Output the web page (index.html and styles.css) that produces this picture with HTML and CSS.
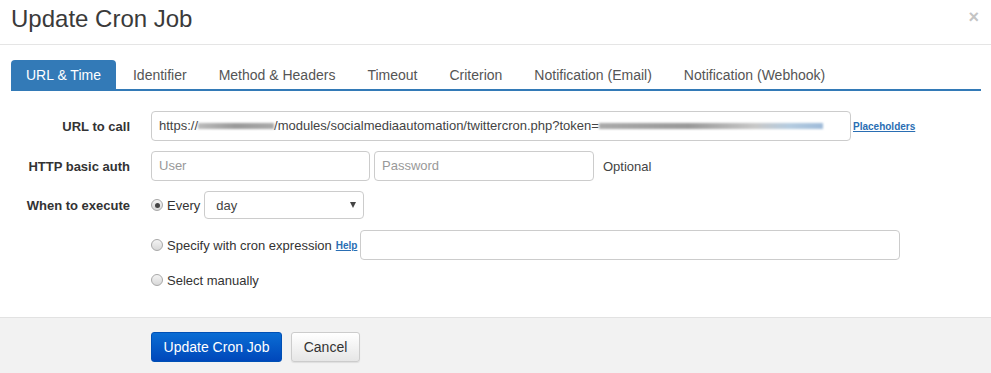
FILE: index.html
```html
<!DOCTYPE html>
<html>
<head>
<meta charset="utf-8">
<link rel="stylesheet" href="styles.css">
</head>
<body>
<div class="modal">
  <div class="modal-header">
    <h4 class="modal-title">Update Cron Job</h4>
    <span class="close">×</span>
  </div>
  <div class="modal-body">
    <ul class="tabs">
      <li class="tab active">URL &amp; Time</li>
      <li class="tab">Identifier</li>
      <li class="tab">Method &amp; Headers</li>
      <li class="tab">Timeout</li>
      <li class="tab">Criterion</li>
      <li class="tab">Notification (Email)</li>
      <li class="tab">Notification (Webhook)</li>
    </ul>
    <div class="form">
      <div class="label">URL to call</div>
      <div class="field">
        <div class="input url">https://<span class="blur b1"></span>/modules/socialmediaautomation/twittercron.php?token=<span class="blur b2"></span></div>
        <a class="small-link">Placeholders</a>
      </div>

      <div class="label">HTTP basic auth</div>
      <div class="field auth">
        <div class="input user placeholder">User</div>
        <div class="input pass placeholder">Password</div>
        <span class="hint">Optional</span>
      </div>

      <div class="label top">When to execute</div>
      <div class="options">
        <div class="opt opt-every">
          <span class="radio checked"></span><span class="opt-text">Every</span>
          <div class="select"><span>day</span><span class="caret"></span></div>
        </div>
        <div class="opt opt-cron">
          <span class="radio"></span><span class="opt-text">Specify with cron expression</span>
          <a class="small-link help">Help</a>
          <div class="input cron"></div>
        </div>
        <div class="opt opt-manual">
          <span class="radio"></span><span class="opt-text">Select manually</span>
        </div>
      </div>
    </div>
  </div>
  <div class="modal-footer">
    <button class="btn btn-primary">Update Cron Job</button>
    <button class="btn btn-default">Cancel</button>
  </div>
</div>
</body>
</html>
```

FILE: styles.css
```css
* { box-sizing: border-box; }
html, body { margin: 0; padding: 0; background: #fff; }
body {
  font-family: "Liberation Sans", Arial, sans-serif;
  font-size: 13px;
  color: #333;
}
.modal { width: 991px; }
.modal-header {
  height: 45px;
  border-bottom: 1px solid #e5e5e5;
  display: flex;
  justify-content: space-between;
  align-items: flex-start;
  padding: 5px 12px 0 11px;
}
.modal-title {
  margin: 0;
  font-size: 24px;
  font-weight: normal;
  line-height: 28px;
  color: #3a3a3a;
}
.close {
  font-size: 18px;
  font-weight: bold;
  color: #c4c4c4;
  line-height: 18px;
  margin-top: 3px;
}
.modal-body { padding: 15px 10px 27px 11px; }
.tabs {
  list-style: none;
  margin: 0;
  padding: 0;
  display: flex;
  border-bottom: 2px solid #337ab7;
}
.tab {
  font-size: 14px;
  line-height: 20px;
  padding: 5px 15px 4px;
  margin-right: 2px;
  color: #555;
  border-radius: 4px 4px 0 0;
}
.tab.active { background: #337ab7; color: #fff; }
.form {
  margin-top: 20px;
  display: grid;
  grid-template-columns: 119px 1fr;
  column-gap: 21px;
  row-gap: 10px;
}
.label {
  font-weight: bold;
  text-align: right;
  align-self: center;
}
.label.top { align-self: start; margin-top: 7px; }
.field { display: flex; align-items: center; }
.input {
  height: 30px;
  border: 1px solid #ccc;
  border-radius: 4px;
  padding: 0 7px;
  line-height: 28px;
  font-size: 13px;
  color: #555;
  white-space: nowrap;
  overflow: hidden;
  background: #fff;
}
.placeholder { color: #999; }
.url { width: 700px; color: #444; }
.blur {
  display: inline-block;
  vertical-align: middle;
  height: 6px;
  filter: blur(1.2px);
  margin-top: -2px;
}
.b1 { width: 76px; background: linear-gradient(90deg, #bbb, #999 50%, #aaa); }
.b2 { width: 224px; background: linear-gradient(90deg, #aaa, #999 40%, #c8c8c8 70%, #b5cce0 85%, #9fbbd9); }
.small-link {
  font-size: 10px;
  font-weight: bold;
  color: #2a6eb3;
  text-decoration: underline;
}
.field .small-link { margin-left: 2px; }
.auth .user { width: 219px; }
.auth .pass { width: 220px; margin-left: 4px; }
.hint { margin-left: 9px; color: #444; }
.options { display: flex; flex-direction: column; }
.opt { display: flex; align-items: center; }
.opt-every { height: 28px; }
.opt-cron { height: 30px; margin-top: 11px; }
.opt-manual { height: 20px; margin-top: 10px; }
.radio {
  width: 12px;
  height: 12px;
  border-radius: 50%;
  border: 1px solid #a8a8a8;
  background: linear-gradient(#f4f4f4, #d8d8d8);
  display: inline-flex;
  align-items: center;
  justify-content: center;
  flex: none;
}
.radio.checked::after {
  content: "";
  width: 5px;
  height: 5px;
  border-radius: 50%;
  background: #444;
}
.opt-text { margin-left: 4px; color: #333; }
.select {
  width: 160px;
  height: 28px;
  margin-left: 4px;
  border: 1px solid #ccc;
  border-radius: 4px;
  display: flex;
  align-items: center;
  justify-content: space-between;
  padding: 0 7px 0 11px;
  color: #444;
}
.caret {
  width: 0;
  height: 0;
  border-left: 3.5px solid transparent;
  border-right: 3.5px solid transparent;
  border-top: 6px solid #444;
}
.help { margin-left: 4px; }
.cron { width: 540px; margin-left: 3px; }
.modal-footer {
  border-top: 1px solid #e2e2e2;
  background: #f2f2f2;
  height: 56px;
  padding: 14px 0 0 151px;
  display: flex;
  align-items: flex-start;
}
.btn {
  font-family: "Liberation Sans", Arial, sans-serif;
  font-size: 14px;
  height: 30px;
  padding: 0;
  border-radius: 3px;
  line-height: 28px;
  margin-right: 9px;
  white-space: nowrap;
  text-align: center;
}
.btn-primary {
  width: 131px;
  color: #fff;
  border: 1px solid #0050b5;
  background: linear-gradient(#0a6dd4, #0047ba);
}
.btn-default {
  width: 69px;
  color: #333;
  border: 1px solid #ccc;
  background: linear-gradient(#fff, #e6e6e6);
  box-shadow: 0 1px 1px rgba(0,0,0,0.08);
}
```
